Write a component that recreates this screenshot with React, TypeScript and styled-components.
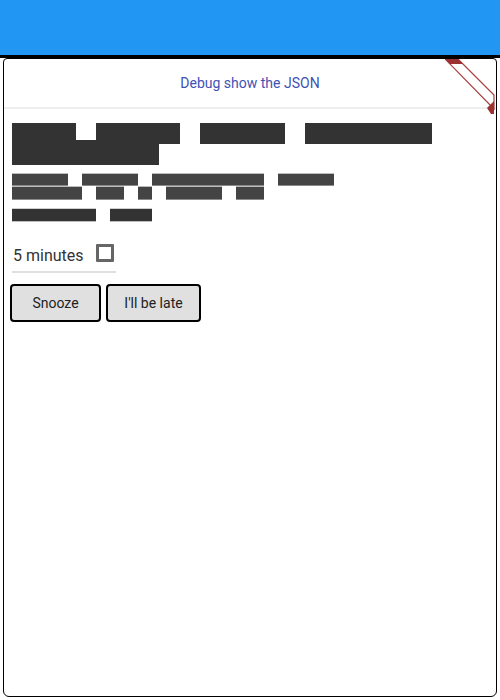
import { createGlobalStyle, styled } from "styled-components";

const GlobalStyle = createGlobalStyle`
  html, body {
    margin: 0;
    padding: 0;
    background: #fff;
    font-family: Roboto, "Liberation Sans", sans-serif;
  }
`;

const headingWords = [64, 84, 85, 127];
const detailLines = [
  [56, 56, 112, 56],
  [70, 28, 14, 56, 28],
];
const footerWords = [84, 42];

const DebugRibbon = () => (
  <Ribbon width="52" height="56" viewBox="0 0 52 56">
    <polygon
      points="0,0 13,0 49,36 49,50"
      fill="#fff"
      stroke="#a8403f"
      strokeWidth="1.2"
    />
    <polygon points="0,0 13,0 18,5 5,5" fill="#9b3131" />
    <polygon points="42,49 49,42 49,55 46,55" fill="#9b3131" />
  </Ribbon>
);

const App = () => {
  return (
    <>
      <GlobalStyle />
      <Page>
        <TopBar />
        <Strip />
        <Card>
          <DebugRibbon />
          <Header>Debug show the JSON</Header>
          <Body>
            <Heading>
              <WordLine $gap={20}>
                {headingWords.map((w, i) => (
                  <Redacted key={i} $w={w} $h={21} $solid />
                ))}
              </WordLine>
              <WordLine $gap={20} $overlap>
                <Redacted $w={147} $h={25} $solid />
              </WordLine>
            </Heading>
            <Details>
              {detailLines.map((line, i) => (
                <WordLine key={i} $gap={14}>
                  {line.map((w, j) => (
                    <Redacted key={j} $w={w} $h={i === 0 ? 13 : 14} $light />
                  ))}
                </WordLine>
              ))}
            </Details>
            <Footer>
              <WordLine $gap={14}>
                {footerWords.map((w, i) => (
                  <Redacted key={i} $w={w} $h={14} />
                ))}
              </WordLine>
            </Footer>
            <Field>
              <FieldLabel>5 minutes</FieldLabel>
              <Checkbox type="checkbox" />
            </Field>
            <ButtonRow>
              <ActionButton $w={91}>Snooze</ActionButton>
              <ActionButton $w={95}>I'll be late</ActionButton>
            </ButtonRow>
          </Body>
        </Card>
      </Page>
    </>
  );
};

export default App;

const Page = styled.div`
  width: 500px;
  height: 700px;
  display: flex;
  flex-direction: column;
`;

const TopBar = styled.div`
  height: 55px;
  background: #2196f3;
`;

const Strip = styled.div`
  height: 3px;
  background: #000;
`;

const Card = styled.div`
  position: relative;
  height: 637px;
  margin: 0 3px;
  border: 1px solid #000;
  border-radius: 4px 4px 6px 6px;
  overflow: hidden;
  display: flex;
  flex-direction: column;
`;

const Ribbon = styled.svg`
  position: absolute;
  top: 0;
  right: -1px;
  display: block;
`;

const Header = styled.div`
  height: 48px;
  display: flex;
  align-items: center;
  justify-content: center;
  font-size: 14px;
  color: #3f51b5;
  border-bottom: 2px solid #eeeeee;
`;

const Body = styled.div`
  display: flex;
  flex-direction: column;
  align-items: flex-start;
  padding: 14px 8px;
`;

const Heading = styled.div`
  display: flex;
  flex-direction: column;
`;

const WordLine = styled.div<{ $gap: number; $overlap?: boolean }>`
  display: flex;
  gap: ${({ $gap }) => $gap}px;
  margin-top: ${({ $overlap }) => ($overlap ? "-4px" : "0")};
`;

const Redacted = styled.span<{
  $w: number;
  $h: number;
  $light?: boolean;
  $solid?: boolean;
}>`
  display: block;
  width: ${({ $w }) => $w}px;
  height: ${({ $h }) => $h}px;
  box-sizing: border-box;
  background: ${({ $light }) => ($light ? "#444" : "#333")};
  border-top: ${({ $solid, $light }) =>
    $solid ? "none" : `1px solid ${$light ? "#bdbdbd" : "#cfcfcf"}`};
  border-bottom: ${({ $solid, $light }) =>
    $solid ? "none" : `1px solid ${$light ? "#8a8a8a" : "#bdbdbd"}`};
`;

const Details = styled.div`
  display: flex;
  flex-direction: column;
  margin-top: 8px;
`;

const Footer = styled.div`
  margin-top: 8px;
`;

const Field = styled.label`
  width: 104px;
  height: 38px;
  margin-top: 11px;
  display: flex;
  align-items: center;
  gap: 12px;
  border-bottom: 2px solid #e0e0e0;
`;

const FieldLabel = styled.span`
  font-size: 16px;
  color: #333;
  padding-left: 1px;
  padding-top: 6px;
`;

const Checkbox = styled.input`
  appearance: none;
  margin: 2px 0 0;
  width: 18px;
  height: 18px;
  border: 3px solid #666;
  border-radius: 1px;
  box-sizing: border-box;
  background: #fff;
`;

const ButtonRow = styled.div`
  display: flex;
  gap: 5px;
  margin-top: 11px;
  margin-left: -2px;
`;

const ActionButton = styled.button<{ $w: number }>`
  width: ${({ $w }) => $w}px;
  height: 38px;
  padding: 0;
  background: #e0e0e0;
  border: 2px solid #000;
  border-radius: 4px;
  font-family: Roboto, "Liberation Sans", sans-serif;
  font-size: 14px;
  color: #222;
`;
